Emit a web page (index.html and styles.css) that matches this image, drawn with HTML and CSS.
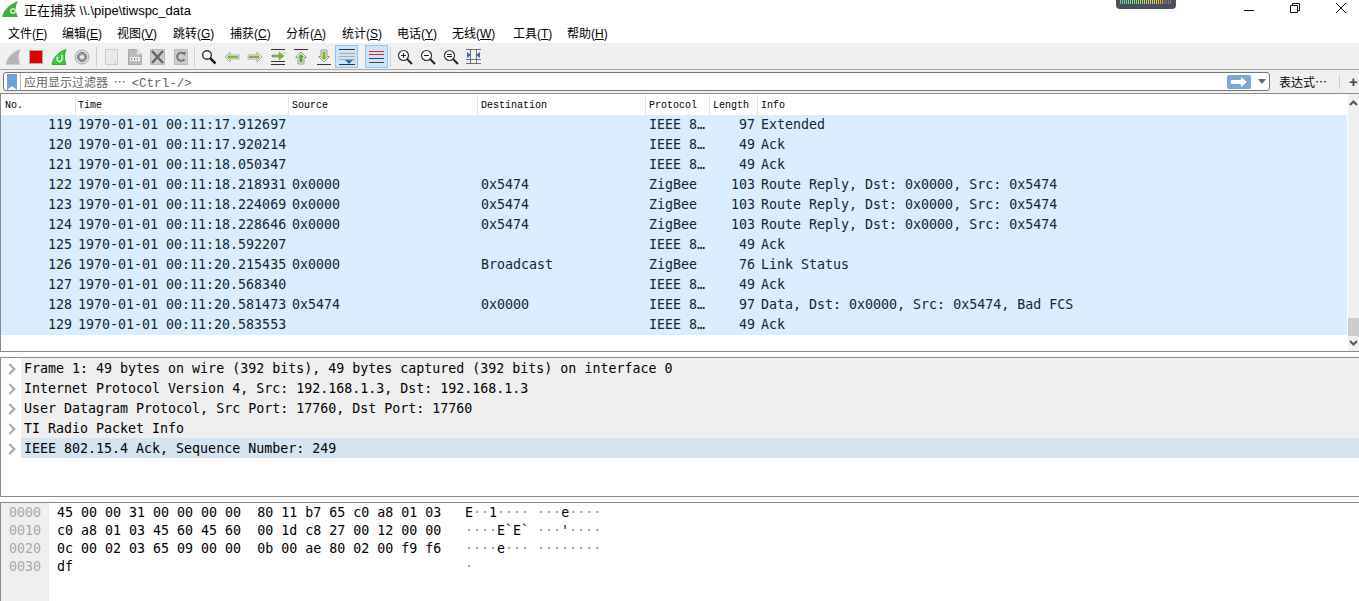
FILE: index.html
```html
<!DOCTYPE html>
<html lang="zh">
<head>
<meta charset="utf-8">
<title>正在捕获 \\.\pipe\tiwspc_data</title>
<link rel="stylesheet" href="styles.css">
</head>
<body>
<div class="app">
  <header class="titlebar">
    <svg class="app-icon" width="17" height="17" viewBox="0 0 17 17"><path d="M0 16C2 8 8 3 16 0C13 5 13 11 16 16z" fill="#3fae3f"/><circle cx="11" cy="10" r="3" fill="#c8e8c0"/><circle cx="11" cy="10" r="1.300" fill="#3c9a3c"/></svg>
    <span class="title-text">正在捕获 \\.\pipe\tiwspc_data</span>
    <div class="meter"><div class="meter-bars"></div></div>
    <div class="win-controls">
      <svg width="12" height="12" viewBox="0 0 12 12"><path d="M1 8.500h10" stroke="#111" fill="none"/></svg>
      <svg width="12" height="12" viewBox="0 0 12 12"><path d="M1.500 3.500h7v7h-7zM3.500 3.500v-2h7v7h-2" stroke="#111" fill="none"/></svg>
      <svg width="12" height="12" viewBox="0 0 12 12"><path d="M1 1l10 10M11 1L1 11" stroke="#111" fill="none"/></svg>
    </div>
  </header>

  <nav class="menubar">
    <span class="menu m1">文件(<u>F</u>)</span>
    <span class="menu m2">编辑(<u>E</u>)</span>
    <span class="menu m3">视图(<u>V</u>)</span>
    <span class="menu m4">跳转(<u>G</u>)</span>
    <span class="menu m5">捕获(<u>C</u>)</span>
    <span class="menu m6">分析(<u>A</u>)</span>
    <span class="menu m7">统计(<u>S</u>)</span>
    <span class="menu m8">电话(<u>Y</u>)</span>
    <span class="menu m9">无线(<u>W</u>)</span>
    <span class="menu m10">工具(<u>T</u>)</span>
    <span class="menu m11">帮助(<u>H</u>)</span>
  </nav>

  <div class="toolbar">
    <span class="tool"><svg width="16" height="16" viewBox="0 0 16 16"><path d="M1 15.500C2 9 7 3 15 .5c-2 5-2 10 0 15z" fill="#b5b5b5" stroke="#c8c8c8" stroke-width=".6"/></svg></span>
    <span class="tool"><svg width="14" height="14" viewBox="0 0 14 14"><rect x=".5" y=".5" width="13" height="13" fill="#e00000" stroke="#aaa"/></svg></span>
    <span class="tool"><svg width="16" height="16" viewBox="0 0 16 16"><path d="M1 15.500C2 9 7 3 15 .5c-2 5-2 10 0 15z" fill="#2fd22f" stroke="#1c8c1c" stroke-width=".7"/><path d="M11 6v4a2.500 2.500 0 1 1-4-2" fill="none" stroke="#fff" stroke-width="1.500"/></svg></span>
    <span class="tool"><svg width="16" height="16" viewBox="0 0 16 16"><circle cx="8" cy="8" r="7" fill="#ddd" stroke="#aaa"/><circle cx="8" cy="8" r="4.500" fill="#999" stroke="#777"/><circle cx="8" cy="8" r="2" fill="#eee"/></svg></span>
    <span class="sep"></span>
    <span class="tool"><svg width="14" height="16" viewBox="0 0 14 16"><path d="M.5.500h12v15H.5z" fill="#e9e9e9" stroke="#ccc"/><path d="M10 11.500v4" stroke="#ccc"/></svg></span>
    <span class="tool"><svg width="14" height="16" viewBox="0 0 14 16"><path d="M.5.500h8l5 5v10H.5z" fill="#bbb" stroke="#aaa"/><path d="M8.500.500v5h5z" fill="#eee" stroke="#aaa" stroke-width=".5"/><path d="M2 8h10v4H2z" fill="#eee"/><path d="M3.500 9v2M6.500 9v2M9.500 9v2" stroke="#888"/></svg></span>
    <span class="tool"><svg width="15" height="16" viewBox="0 0 15 16"><path d="M.5.500h14v15H.5z" fill="#ccc" stroke="#bbb"/><path d="M2 2l11 12M13 2L2 14" stroke="#666" stroke-width="2.500"/></svg></span>
    <span class="tool"><svg width="14" height="16" viewBox="0 0 14 16"><path d="M.5.500h13v15H.5z" fill="#ccc" stroke="#bbb"/><path d="M10.500 10A4 4 0 1 1 10 5" fill="none" stroke="#777" stroke-width="2"/><path d="M8 3l4 0-1 4z" fill="#777"/></svg></span>
    <span class="sep sep2"></span>
    <span class="tool"><svg width="16" height="16" viewBox="0 0 16 16"><circle cx="6" cy="6" r="4.300" fill="#fff" stroke="#333" stroke-width="1.400"/><path d="M9 9l5.500 5.500" stroke="#222" stroke-width="2.500"/></svg></span>
    <span class="tool"><svg width="16" height="12" viewBox="0 0 16 12"><path d="M1 6l5-5v3h9v4H6v3z" fill="#eee" stroke="#aaa"/><path d="M3 6l2.500-2.500V5H14v2H5.500v1.500z" fill="#7cbc1e"/></svg></span>
    <span class="tool"><svg width="16" height="12" viewBox="0 0 16 12"><path d="M15 6l-5-5v3H1v4h9v3z" fill="#eee" stroke="#aaa"/><path d="M13 6l-2.500-2.500V5H2v2h8.500v1.500z" fill="#7cbc1e"/></svg></span>
    <span class="tool"><svg width="16" height="16" viewBox="0 0 16 16"><path d="M1 .5h14M1 12.500h14M1 15.500h14" stroke="#333"/><path d="M2 6h7V3l5 4-5 4V8H2z" fill="#7cbc1e" stroke="#888" stroke-width=".6"/><circle cx="14.500" cy="4" r="1.300" fill="#f2d94a"/></svg></span>
    <span class="tool"><svg width="14" height="16" viewBox="0 0 14 16"><path d="M0 .5h14" stroke="#333"/><path d="M7 3l5.500 5.500H10V15H4V8.500H1.500z" fill="#eee" stroke="#999"/><path d="M7 5l3 3H8.500v5.500h-3V8H4z" fill="#4fb018"/></svg></span>
    <span class="tool"><svg width="14" height="16" viewBox="0 0 14 16"><path d="M0 15.500h14" stroke="#333"/><path d="M7 13l5.500-5.500H10V1H4v6.500H1.500z" fill="#eee" stroke="#999"/><path d="M7 11l3-3H8.500V2.500h-3V8H4z" fill="#7cbc1e"/></svg></span>
    <span class="tool on"><svg width="16" height="16" viewBox="0 0 16 16"><path d="M0 .5h16M0 15.500h16" stroke="#333"/><path d="M0 4.500h16M0 7.500h16M0 10.500h16" stroke="#aaa"/><path d="M6 11h8l-4 4z" fill="#2e6fb4"/></svg></span>
    <span class="tool on gap-left"><svg width="15" height="14" viewBox="0 0 15 14"><path d="M0 1.500h15M0 4.500h15" stroke="#e0242c"/><path d="M0 8.500h15" stroke="#26408c"/><path d="M0 12.500h15" stroke="#444"/></svg></span>
    <span class="sep sep3"></span>
    <span class="tool"><svg width="16" height="16" viewBox="0 0 16 16"><circle cx="6.500" cy="6.500" r="5" fill="#fff" stroke="#333" stroke-width="1.200"/><path d="M10 10l5 5" stroke="#222" stroke-width="2"/><path d="M4 6.500h5M6.500 4v5" stroke="#222"/></svg></span>
    <span class="tool"><svg width="16" height="16" viewBox="0 0 16 16"><circle cx="6.500" cy="6.500" r="5" fill="#fff" stroke="#333" stroke-width="1.200"/><path d="M10 10l5 5" stroke="#222" stroke-width="2"/><path d="M4 6.500h5" stroke="#222"/></svg></span>
    <span class="tool"><svg width="16" height="16" viewBox="0 0 16 16"><circle cx="6.500" cy="6.500" r="5" fill="#fff" stroke="#333" stroke-width="1.200"/><path d="M10 10l5 5" stroke="#222" stroke-width="2"/><path d="M4 5.500h5M4 7.500h5" stroke="#222"/></svg></span>
    <span class="tool"><svg width="15" height="15" viewBox="0 0 15 15"><path d="M0 .5h15M0 14.500h15M0 10.500h15M4.500 0v15M10.500 0v15" stroke="#555" stroke-width=".8"/><path d="M1 3l4 3-4 3zM14 3l-4 3 4 3z" fill="#2e6fb4"/></svg></span>
  </div>

  <div class="filterbar">
    <div class="filter-input">
      <svg class="bookmark" width="10" height="16" viewBox="0 0 10 16"><path d="M0 0h10v16L5 12 0 16z" fill="#6f9fd8"/></svg>
      <span class="filter-placeholder">应用显示过滤器 <span class="cjk-dots ph-dots">…</span> <span class="shortcut">&lt;Ctrl-/&gt;</span></span>
      <svg class="apply" width="24" height="14" viewBox="0 0 24 14"><rect width="24" height="14" rx="2" fill="#7ea7d6"/><path d="M4 5h10V2l6 5-6 5V9H4z" fill="#fff"/></svg>
      <svg class="drop" width="8" height="5" viewBox="0 0 8 5"><path d="M0 0h8L4 5z" fill="#666"/></svg>
    </div>
    <span class="expr">表达式<span class="cjk-dots">…</span></span>
    <span class="vsep"></span>
    <span class="plus">+</span>
  </div>

  <section class="packets">
    <div class="packet-table">
      <div class="phead">
        <span>No.</span><span>Time</span><span>Source</span><span>Destination</span><span>Protocol</span><span>Length</span><span>Info</span>
      </div>
      <div class="prow"><span class="num">119</span><span>1970-01-01 00:11:17.912697</span><span></span><span></span><span>IEEE 8…</span><span class="num">97</span><span>Extended</span></div>
      <div class="prow"><span class="num">120</span><span>1970-01-01 00:11:17.920214</span><span></span><span></span><span>IEEE 8…</span><span class="num">49</span><span>Ack</span></div>
      <div class="prow"><span class="num">121</span><span>1970-01-01 00:11:18.050347</span><span></span><span></span><span>IEEE 8…</span><span class="num">49</span><span>Ack</span></div>
      <div class="prow"><span class="num">122</span><span>1970-01-01 00:11:18.218931</span><span>0x0000</span><span>0x5474</span><span>ZigBee</span><span class="num">103</span><span>Route Reply, Dst: 0x0000, Src: 0x5474</span></div>
      <div class="prow"><span class="num">123</span><span>1970-01-01 00:11:18.224069</span><span>0x0000</span><span>0x5474</span><span>ZigBee</span><span class="num">103</span><span>Route Reply, Dst: 0x0000, Src: 0x5474</span></div>
      <div class="prow"><span class="num">124</span><span>1970-01-01 00:11:18.228646</span><span>0x0000</span><span>0x5474</span><span>ZigBee</span><span class="num">103</span><span>Route Reply, Dst: 0x0000, Src: 0x5474</span></div>
      <div class="prow"><span class="num">125</span><span>1970-01-01 00:11:18.592207</span><span></span><span></span><span>IEEE 8…</span><span class="num">49</span><span>Ack</span></div>
      <div class="prow"><span class="num">126</span><span>1970-01-01 00:11:20.215435</span><span>0x0000</span><span>Broadcast</span><span>ZigBee</span><span class="num">76</span><span>Link Status</span></div>
      <div class="prow"><span class="num">127</span><span>1970-01-01 00:11:20.568340</span><span></span><span></span><span>IEEE 8…</span><span class="num">49</span><span>Ack</span></div>
      <div class="prow"><span class="num">128</span><span>1970-01-01 00:11:20.581473</span><span>0x5474</span><span>0x0000</span><span>IEEE 8…</span><span class="num">97</span><span>Data, Dst: 0x0000, Src: 0x5474, Bad FCS</span></div>
      <div class="prow"><span class="num">129</span><span>1970-01-01 00:11:20.583553</span><span></span><span></span><span>IEEE 8…</span><span class="num">49</span><span>Ack</span></div>
    </div>
    <div class="scrollbar">
      <svg width="9" height="6" viewBox="0 0 9 6"><path d="M1 5l3.500-3.500L8 5" fill="none" stroke="#555" stroke-width="2"/></svg>
      <div class="track"><div class="thumb"></div></div>
      <svg width="9" height="6" viewBox="0 0 9 6"><path d="M1 1l3.500 3.500L8 1" fill="none" stroke="#555" stroke-width="2"/></svg>
    </div>
  </section>

  <section class="details">
    <div class="drow"><span class="chev"></span><span class="dtext">Frame 1: 49 bytes on wire (392 bits), 49 bytes captured (392 bits) on interface 0</span></div>
    <div class="drow"><span class="chev"></span><span class="dtext">Internet Protocol Version 4, Src: 192.168.1.3, Dst: 192.168.1.3</span></div>
    <div class="drow"><span class="chev"></span><span class="dtext">User Datagram Protocol, Src Port: 17760, Dst Port: 17760</span></div>
    <div class="drow"><span class="chev"></span><span class="dtext">TI Radio Packet Info</span></div>
    <div class="drow"><span class="chev"></span><span class="dtext sel">IEEE 802.15.4 Ack, Sequence Number: 249</span></div>
  </section>

  <section class="hex">
    <div class="offsets"><div>0000</div><div>0010</div><div>0020</div><div>0030</div></div>
    <pre class="bytes">45 00 00 31 00 00 00 00  80 11 b7 65 c0 a8 01 03
c0 a8 01 03 45 60 45 60  00 1d c8 27 00 12 00 00
0c 00 02 03 65 09 00 00  0b 00 ae 80 02 00 f9 f6
df</pre>
    <pre class="ascii">E<i>··</i>1<i>····</i> <i>···</i>e<i>····</i>
<i>····</i>E`E` <i>···</i>'<i>····</i>
<i>····</i>e<i>···</i> <i>········</i>
<i>·</i></pre>
  </section>
</div>
</body>
</html>
```
FILE: styles.css
```css
* { box-sizing: border-box; }
html, body { margin: 0; padding: 0; height: 100%; overflow: hidden; background: #fff; }
.app {
  width: 1359px; height: 601px; display: flex; flex-direction: column;
  font-family: "Liberation Sans", "Noto Sans CJK SC", sans-serif; font-size: 12px; color: #000;
}

.titlebar { height: 22px; display: flex; align-items: center; padding-left: 2px; position: relative; flex: none; }
.app-icon { margin-right: 5px; margin-top: -3px; flex: none; }
.title-text { font-size: 13px; margin-top: -3px; }
.meter {
  position: absolute; left: 1116px; top: 0; width: 60px; height: 9px; background: #4a4f5c;
  border-radius: 0 0 4px 4px; padding: 0 4px;
}
.meter-bars {
  height: 4px; width: 52px;
  background: repeating-linear-gradient(90deg, transparent 0 1px, #4a4f5c 1px 2px),
    linear-gradient(90deg, #57d7b0 0%, #a4dc70 40%, #e7d44c 70%, #e99a2c 82%, #777 83%, #777 100%);
}
.win-controls { margin-left: auto; display: flex; gap: 34px; padding-right: 12px; margin-top: -6px; }

.menubar { height: 22px; display: flex; align-items: center; padding-left: 8px; flex: none; border-bottom: 1px solid #f0f0f0; }
.menu { display: block; white-space: nowrap; font-size: 12px; }
.m1 { width: 54px; } .m2 { width: 55px; } .m3 { width: 56px; } .m4 { width: 57px; } .m5 { width: 56px; }
.m6 { width: 56px; } .m7 { width: 55px; } .m8 { width: 55px; } .m9 { width: 61px; } .m10 { width: 54px; } .m11 { width: 50px; }

.toolbar {
  height: 26px; display: flex; align-items: center; padding-left: 1px; background: #f0f0f0;
  border-bottom: 1px solid #a8a8a8; flex: none;
}
.tool { width: 23px; height: 23px; display: flex; align-items: center; justify-content: center; flex: none; border: 1px solid transparent; }
.tool.on { background: #cde4f7; border-color: #8cc4ee; }
.tool.gap-left { margin-left: 7px; }
.sep { width: 1px; height: 20px; background: #cfcfcf; margin: 0 3px; flex: none; }
.sep2 { margin: 0 2px; }
.sep3 { margin: 0 2px; }

.filterbar { height: 23px; display: flex; align-items: center; flex: none; background: #f0f0f0; padding-left: 3px; }
.filter-input {
  width: 1267px; height: 19px; background: #fff; border: 1px solid #777; border-radius: 3px;
  display: flex; align-items: center; padding-left: 3px; flex: none;
}
.bookmark { flex: none; }
.filter-placeholder {
  margin-left: 3px; padding-left: 3px; border-left: 1px solid #bbb; height: 17px; line-height: 17px;
  color: #666; font-family: "Noto Sans CJK SC", sans-serif; font-size: 12px; flex: 1;
  white-space: pre;
}
.cjk-dots { font-family: "Noto Sans CJK SC", sans-serif; }
.ph-dots { margin: 0 3px; }
.shortcut { font-family: "Liberation Mono", monospace; font-size: 12.6px; }
.apply { flex: none; margin-right: 7px; }
.drop { flex: none; margin-right: 3px; }
.expr { margin-left: 9px; width: 48px; font-size: 12px; flex: none; white-space: nowrap; font-family: "Noto Sans CJK SC", sans-serif; }
.vsep { width: 1px; height: 14px; background: #ccc; margin-left: 12px; flex: none; }
.plus { margin-left: 9px; font-size: 15px; font-weight: bold; color: #444; line-height: 1; }

.packets {
  height: 259px; display: flex; flex: none; border-top: 1px solid #8a8a8a; border-bottom: 1px solid #8a8a8a;
  border-left: 1px solid #8a8a8a; background: #fff;
}
.packet-table { flex: 1; min-width: 0; }
.phead, .prow { display: grid; grid-template-columns: 75px 213px 189px 168px 64px 48px 1fr; }
.phead { height: 21px; align-items: center; font-family: "Liberation Mono", monospace; font-size: 10px; }
.phead span { padding-left: 3px; border-right: 1px solid #e4e4e4; height: 20px; line-height: 21px; }
.phead span:first-child { padding-left: 4px; }
.phead span:nth-child(2) { padding-left: 2px; }
.phead span:last-child { border-right: 0; }
.prow {
  height: 20px; line-height: 20px; background: #daedff; color: #12272e;
  font-family: "DejaVu Sans Mono", monospace; font-size: 13.3px; white-space: pre;
}
.prow span { padding-left: 3px; overflow: hidden; }
.prow span:nth-child(2) { padding-left: 2px; }
.prow span.num { padding-left: 0; padding-right: 3px; text-align: right; }
.prow span.num:first-child { padding-right: 4px; }
.scrollbar { width: 11px; background: #f0f0f0; display: flex; flex-direction: column; align-items: center; padding: 6px 0 5px; margin-left: 1px; flex: none; }
.track { flex: 1; width: 100%; position: relative; }
.thumb { position: absolute; left: 0; right: 0; bottom: 4px; height: 18px; background: #cdcdcd; }

.details {
  margin-top: 5px; height: 140px; flex: none; border-left: 1px solid #8a8a8a; border-top: 1px solid #8a8a8a; border-bottom: 1px solid #8a8a8a;
  font-family: "DejaVu Sans Mono", monospace; font-size: 13.3px;
}
.drow { height: 20px; display: flex; }
.chev { width: 20px; flex: none; position: relative; }
.chev::after {
  content: ""; position: absolute; left: 5px; top: 7px; width: 6px; height: 6px;
  border-top: 2px solid #aaa; border-right: 2px solid #aaa; transform: rotate(45deg);
}
.dtext { flex: 1; background: #efefef; padding-left: 3px; line-height: 21px; white-space: pre; }
.dtext.sel { background: #d6e4ef; }

.hex {
  margin-top: 5px; flex: 1; min-height: 0; display: flex; border-left: 1px solid #8a8a8a; border-top: 1px solid #8a8a8a;
  font-family: "DejaVu Sans Mono", monospace; font-size: 13.3px; line-height: 18px; overflow: hidden;
}
.offsets { width: 48px; background: #efefef; color: #aaa; padding: 1px 0 0 8px; flex: none; }
.bytes, .ascii { margin: 0; padding-top: 1px; font: inherit; line-height: 18px; flex: none; }
.bytes { margin-left: 8px; width: 408px; }
.ascii i { font-style: normal; color: #999; }
```
